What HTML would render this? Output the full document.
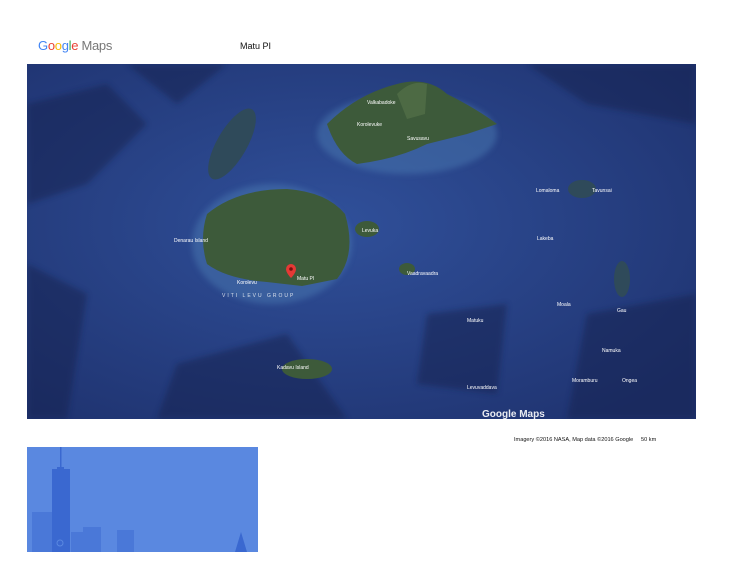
<!DOCTYPE html>
<html><head><style>
body{margin:0;width:749px;height:579px;background:#fff;position:relative;overflow:hidden;font-family:"Liberation Sans",sans-serif}
.abs{position:absolute}
</style></head><body>
<div class="abs" style="left:38px;top:38px;font-size:13px;letter-spacing:-0.3px"><span style="color:#4285f4">G</span><span style="color:#ea4335">o</span><span style="color:#fbbc05">o</span><span style="color:#4285f4">g</span><span style="color:#34a853">l</span><span style="color:#ea4335">e</span> <span style="color:#777">Maps</span></div>
<div class="abs" style="left:240px;top:41px;font-size:9px;color:#111">Matu PI</div>
<svg class="abs" style="left:27px;top:64px" width="669" height="355" viewBox="0 0 669 355">
<defs>
<radialGradient id="bg" cx="45%" cy="45%" r="70%"><stop offset="0" stop-color="#30509a"/><stop offset="1" stop-color="#1f3370"/></radialGradient>
<filter id="b"><feGaussianBlur stdDeviation="3"/></filter>
</defs>
<rect width="669" height="355" fill="url(#bg)"/>
<g fill="#15234f" opacity=".5" filter="url(#b)">
<path d="M0 40 L80 20 L120 60 L60 120 L0 140Z"/><path d="M0 200 L60 230 L40 355 L0 355Z"/>
<path d="M500 0 L669 0 L669 60 L560 40Z"/><path d="M560 250 L669 230 L669 355 L540 355Z"/>
<path d="M150 300 L260 270 L320 355 L130 355Z"/>
<path d="M100 0 L200 0 L150 40Z"/><path d="M400 250 L480 240 L470 330 L390 320Z"/>
</g>
<g fill="#4a78b0" opacity=".5" filter="url(#b)">
<ellipse cx="245" cy="180" rx="80" ry="60"/><ellipse cx="380" cy="70" rx="90" ry="40"/>
</g>
<path d="M180 150 Q210 125 260 125 Q300 128 318 150 Q330 190 310 215 L275 222 L240 218 Q200 215 180 200 Q172 175 180 150Z" fill="#3d5a3a"/>
<path d="M300 60 Q330 30 370 20 Q400 12 420 30 Q450 45 470 60 L440 70 L400 80 Q370 95 330 100 Q310 90 300 60Z" fill="#3d5a3a"/>
<path d="M370 30 Q385 15 400 20 L398 50 L380 55Z" fill="#4d6a44"/>
<ellipse cx="340" cy="165" rx="12" ry="8" fill="#3d5a3a"/>
<ellipse cx="555" cy="125" rx="14" ry="9" fill="#2f4a5a"/>
<ellipse cx="595" cy="215" rx="8" ry="18" fill="#2f4a5a"/>
<ellipse cx="280" cy="305" rx="25" ry="10" fill="#3d5a3a"/>
<ellipse cx="205" cy="80" rx="15" ry="40" fill="#2f4a5a" transform="rotate(30 205 80)"/>
<ellipse cx="380" cy="205" rx="8" ry="6" fill="#3d5a3a"/>
<g fill="#fff" font-size="5">
<text x="270" y="216">Matu Pl</text><text x="147" y="178">Denarau Island</text><text x="210" y="220">Korolevu</text>
<text x="380" y="211">Vaadravaadra</text><text x="335" y="168">Levuka</text><text x="509" y="128">Lomaloma</text>
<text x="565" y="128">Tavunsai</text><text x="340" y="40">Valkabadoke</text><text x="330" y="62">Korolevuke</text>
<text x="380" y="76">Savusavu</text><text x="510" y="176">Lakeba</text><text x="530" y="242">Moala</text>
<text x="590" y="248">Gau</text><text x="440" y="325">Levuvaddava</text><text x="545" y="318">Moramburu</text>
<text x="595" y="318">Ongea</text><text x="250" y="305">Kadavu Island</text><text x="575" y="288">Namuka</text>
<text x="440" y="258">Matuku</text><text x="195" y="233" font-size="5" letter-spacing="2" opacity=".8">VITI LEVU GROUP</text>
</g>
<path d="M259 205 a5 5 0 1 1 10 0 c0 4 -5 9 -5 9 c0 0 -5 -5 -5 -9z" fill="#e53935"/>
<circle cx="264" cy="205" r="1.8" fill="#7a1010"/>
<text x="455" y="353" font-size="10" fill="#fff" font-weight="bold" opacity=".9">Google Maps</text>
</svg>
<div class="abs" style="left:514px;top:437px;font-size:5.6px;color:#111;white-space:nowrap">Imagery ©2016 NASA, Map data ©2016 Google &nbsp;&nbsp;&nbsp; 50 km</div>
<svg class="abs" style="left:27px;top:447px" width="231" height="105" viewBox="0 0 231 105">
<rect width="231" height="105" fill="#5a88e0"/>
<rect x="5" y="65" width="22" height="40" fill="#4a78d8"/>
<rect x="33" y="0" width="1.5" height="20" fill="#3a68d0"/>
<rect x="30" y="20" width="7" height="4" fill="#3a68d0"/>
<rect x="25" y="22" width="18" height="83" fill="#3a68d0"/>
<rect x="44" y="85" width="14" height="20" fill="#4a78d8"/>
<rect x="56" y="80" width="18" height="25" fill="#4a78d8"/>
<rect x="90" y="83" width="17" height="22" fill="#4a78d8"/>
<polygon points="208,105 214,85 220,105" fill="#3a68d0"/>
<circle cx="33" cy="96" r="3" fill="none" stroke="#5a88e0"/>
</svg>
</body></html>
